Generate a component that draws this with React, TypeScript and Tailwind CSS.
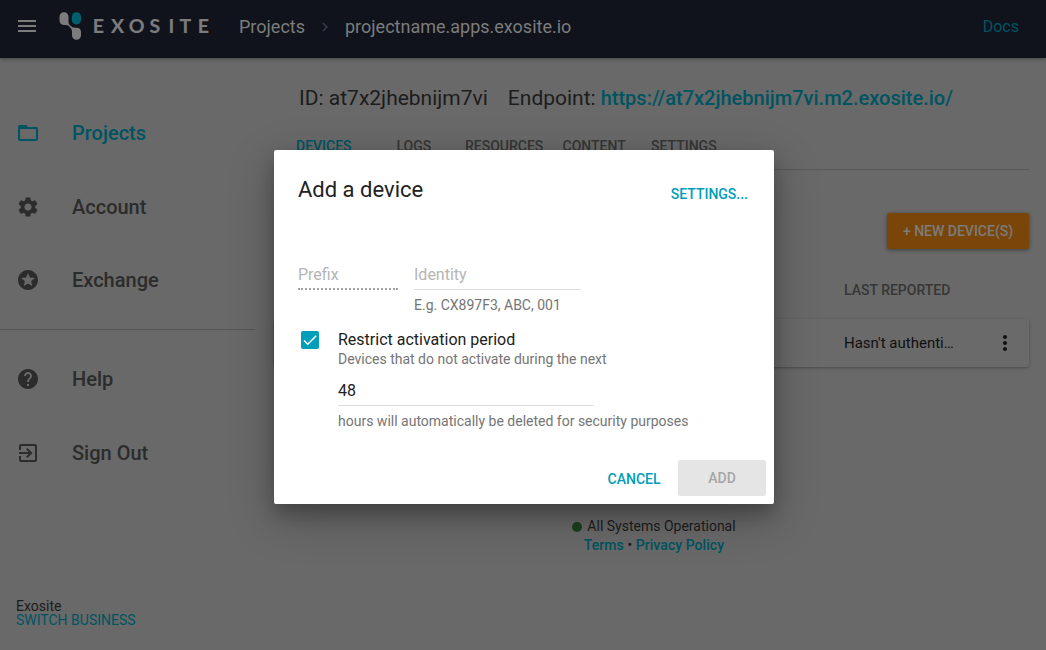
import React from 'react';
import {
  MdMenu,
  MdFolderOpen,
  MdSettings,
  MdStars,
  MdHelp,
  MdExitToApp,
  MdMoreVert,
  MdChevronRight,
  MdCheck,
} from 'react-icons/md';

function Logo() {
  return (
    <svg width="154" height="32" viewBox="58 10 154 32" className="block">
      <path
        d="M64 12.200c2.600 0 4.500 1.900 4.500 4.600v4.400c0 2.200.4 3 1.800 4.400 1.600 1.600 2.600 2.200 4.600 2.200h2c2.500 0 4.100 1.700 4.100 4.200v3.200c0 2.700-1.900 4.600-4.500 4.600s-4.500-1.900-4.500-4.600v-3.400c0-2.200-.7-3.300-2-4.600-1.400-1.500-2.200-2.300-4.200-2.300h-2c-2.600 0-4.300-1.700-4.300-4.300v-3.800c0-2.700 1.900-4.600 4.500-4.600z"
        fill="#7c7c7c"
      />
      <rect x="71.800" y="12.200" width="9.200" height="12.200" rx="4.500" fill="#00606e" />
      <text
        x="92.700 110.900 128.700 149.400 168.500 179.400 197.800"
        y="32.600"
        fontFamily="Lato, sans-serif"
        fontWeight="700"
        fontSize="19.500"
        fill="#7c7c7c"
        stroke="#7c7c7c"
        strokeWidth="0.200"
      >
        EXOSITE
      </text>
    </svg>
  );
}

function Header() {
  return (
    <header className="relative flex h-[58px] shrink-0 items-center bg-[#10131b] text-lg text-[#7c7c7c] shadow-[0_1px_4px_rgba(0,0,0,0.35)]">
      <MdMenu className="ml-[15px] mt-[-6px] size-6" />
      <div className="ml-[19px] mt-[-6px]">
        <Logo />
      </div>
      <nav className="ml-[27px] mt-[-4px] flex items-center">
        <span>Projects</span>
        <MdChevronRight className="mx-[11px] size-[18px] text-[#3c3e44]" />
        <span>projectname.apps.exosite.io</span>
      </nav>
      <a className="ml-auto mr-[27px] mt-[-4px] text-base text-[#005461]">Docs</a>
    </header>
  );
}

type NavItemProps = { icon: React.ReactNode; label: string; active?: boolean };

function NavItem({ icon, label, active }: NavItemProps) {
  return (
    <a
      className={`flex h-[73.5px] items-center gap-8 pl-4 text-xl font-medium ${
        active ? 'text-[#005461]' : 'text-[#2c2c2c]'
      }`}
    >
      {icon}
      <span>{label}</span>
    </a>
  );
}

function Sidebar() {
  return (
    <aside className="flex w-[255px] shrink-0 flex-col pt-[38.5px]">
      <NavItem active icon={<MdFolderOpen className="size-6" />} label="Projects" />
      <NavItem icon={<MdSettings className="size-6" />} label="Account" />
      <NavItem icon={<MdStars className="size-6" />} label="Exchange" />
      <div className="mt-[12px] h-px bg-[#555]" />
      <div className="h-[12.5px]" />
      <NavItem icon={<MdHelp className="size-6" />} label="Help" />
      <NavItem icon={<MdExitToApp className="size-6" />} label="Sign Out" />
      <div className="mb-[23px] ml-4 mt-auto text-sm leading-[14px] text-[#1c1c1c]">
        <div>Exosite</div>
        <div className="text-[#005461]">SWITCH BUSINESS</div>
      </div>
    </aside>
  );
}

function Content() {
  return (
    <main className="ml-[19px] mr-[17px] flex min-w-0 flex-1 flex-col">
      <div className="ml-[25px] mt-[26px] flex h-7 items-baseline whitespace-nowrap text-[21px] leading-7 text-[#1c1c1c]">
        <span>ID: at7x2jhebnijm7vi</span>
        <span className="ml-5">Endpoint:</span>
        <a className="ml-[5px] text-xl font-medium text-[#005461]">https://at7x2jhebnijm7vi.m2.exosite.io/</a>
      </div>
      <div className="flex h-[58px] border-b border-[#595959] pl-[22px] pt-6 text-sm font-medium text-[#363636]">
        <span className="w-[100.5px] text-[#005461]">DEVICES</span>
        <span className="w-[68.5px]">LOGS</span>
        <span className="w-[97.5px]">RESOURCES</span>
        <span className="w-[88.5px]">CONTENT</span>
        <span>SETTINGS</span>
      </div>
      <button className="mt-[43px] h-9 w-[142px] self-end rounded-[2px] bg-[#7a4509] text-sm font-medium text-[#7c7c7c] shadow-[0_1px_4px_rgba(0,0,0,0.4)]">
        + NEW DEVICE(S)
      </button>
      <div className="ml-[570px] mt-[31px] text-sm font-medium text-[#363636]">LAST REPORTED</div>
      <div className="mt-[19px] flex h-12 items-center rounded-[2px] bg-[#6a6a6a] pl-[570px] pr-[12px] text-[15px] text-[#101010] shadow-[0_1px_3px_rgba(0,0,0,0.3)]">
        <span>Hasn't authenti…</span>
        <MdMoreVert className="ml-auto size-6" />
      </div>
      <footer className="mt-[150px] flex w-[760px] flex-col items-center text-sm leading-[19px] text-[#1c1c1c]">
        <div className="flex items-center gap-[5px]">
          <span className="size-[10px] rounded-full bg-[#1b411d]" />
          <span>All Systems Operational</span>
        </div>
        <div className="tracking-[0.06px]">
          <a className="font-medium text-[#005461]">Terms</a> •{' '}
          <a className="font-medium text-[#005461]">Privacy Policy</a>
        </div>
      </footer>
    </main>
  );
}

function AddDeviceDialog() {
  return (
    <section className="flex h-[354px] w-[500px] flex-col rounded-[2px] bg-white text-[#212121] shadow-[0_14px_45px_rgba(0,0,0,0.25),0_10px_18px_rgba(0,0,0,0.22)]">
      <div className="flex h-[89px] justify-between pl-6 pr-[26px] pt-6">
        <h1 className="text-[22px] leading-8">Add a device</h1>
        <a className="pt-[10px] text-sm font-medium text-[#009eb8]">SETTINGS...</a>
      </div>
      <div className="flex gap-4 pl-6 pt-[23px] text-base text-[#b5b5b5]">
        <div className="h-7 w-[100px] border-b-2 border-dotted border-[#a3a3a3] pt-px">Prefix</div>
        <div className="w-[167px]">
          <div className="h-7 border-b border-[#dcdcdc] pt-px">Identity</div>
          <div className="mt-[5px] text-sm text-[#757575]">E.g. CX897F3, ABC, 001</div>
        </div>
      </div>
      <div className="mt-[12px] flex pl-[27px]">
        <span className="mt-[4px] flex size-[18px] items-center justify-center rounded-[2px] bg-[#009eb8] text-white">
          <MdCheck className="size-[18px] stroke-white" />
        </span>
        <div className="ml-[19px] text-sm text-[#757575]">
          <div className="pt-px text-base text-[#212121]">Restrict activation period</div>
          <div className="-mt-[3px]">Devices that do not activate during the next</div>
          <div className="mt-[10px] h-[27px] w-[256px] border-b border-[#dcdcdc] text-base text-[#212121]">48</div>
          <div className="mt-[5px]">hours will automatically be deleted for security purposes</div>
        </div>
      </div>
      <div className="mb-2 mt-auto flex items-center justify-end gap-[17.5px] pr-2 text-sm font-medium">
        <button className="pt-[2px] text-[#009eb8]">CANCEL</button>
        <button className="h-9 w-[88px] rounded-[2px] bg-[#e5e5e5] text-[#a6a6a6]">ADD</button>
      </div>
    </section>
  );
}

export default function App() {
  return (
    <div className="relative flex h-[650px] w-[1046px] flex-col overflow-hidden bg-[#696969] font-[Roboto,sans-serif]">
      <Header />
      <div className="flex flex-1">
        <Sidebar />
        <Content />
      </div>
      <div className="absolute inset-0 pl-[274px] pt-[150px]">
        <AddDeviceDialog />
      </div>
    </div>
  );
}
